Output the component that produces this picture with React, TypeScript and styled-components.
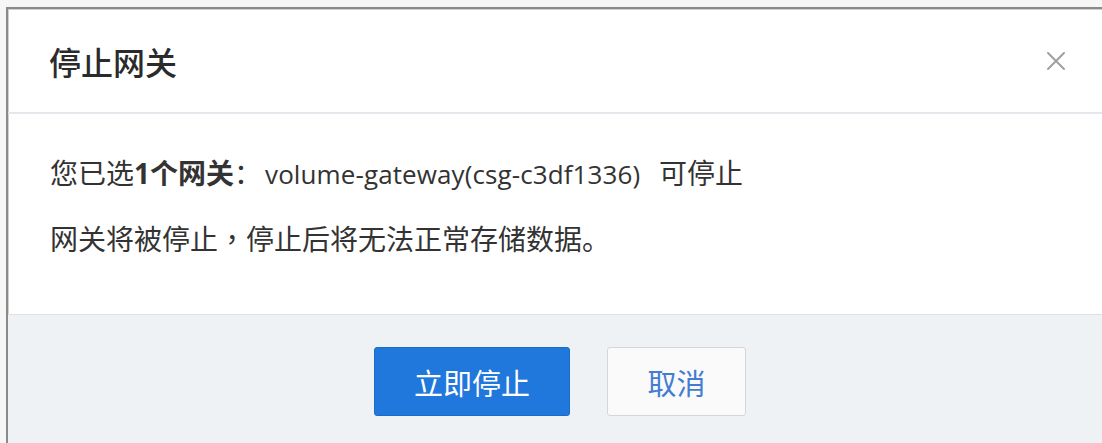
import styled, { createGlobalStyle } from "styled-components";

const GlobalStyle = createGlobalStyle`
  html,
  body {
    margin: 0;
    overflow: hidden;
    background: #f6f6f6;
  }

  body {
    font-family: "Open Sans", "Noto Sans CJK SC", sans-serif;
    color: #333;
  }
`;

const Page = styled.div`
  padding: 7px 0 0 6px;
  height: 443px;
  box-sizing: border-box;
`;

const Dialog = styled.section`
  width: 1104px;
  background: #fff;
  border: 2px solid #8a8a8a;
  box-shadow: inset 1px 1px 0 #cfcfcf;
`;

const Header = styled.header`
  display: flex;
  align-items: center;
  justify-content: space-between;

  height: 103px;
  padding: 0 45px 0 41px;

  border-bottom: 2px solid #e4e7eb;
`;

const Title = styled.h2`
  margin: 0;

  font-family: "Noto Sans CJK SC", sans-serif;
  font-size: 32px;
  font-weight: 500;
  color: #2b2b2b;
`;

const CloseButton = styled.button`
  display: flex;
  padding: 0;

  border: none;
  background: none;
  color: #a0a0a0;

  cursor: pointer;
`;

const Body = styled.div`
  display: flex;
  flex-direction: column;
  gap: 36px;

  height: 200px;
  padding: 45px 42px 0;
  box-sizing: border-box;
`;

const Line = styled.p`
  margin: 0;

  font-size: 28px;
  line-height: 28px;
`;

const Latin = styled.span`
  margin-left: 3px;

  font-size: 26px;
  letter-spacing: 0.1px;
  word-spacing: 12px;
`;

/* full-width comma sits centred in its cell */
const Punct = styled.span`
  font-family: "Noto Sans CJK TC", sans-serif;
`;

const Strong = styled.b`
  font-weight: 700;
`;

const Footer = styled.footer`
  display: flex;
  justify-content: center;
  gap: 37px;

  padding: 32px 0 40px;

  background: #eff2f5;
  border-top: 1px solid #dde1e5;
`;

const Button = styled.button<{ $primary?: boolean }>`
  height: 69px;
  padding: 0;

  font-family: "Noto Sans CJK SC", sans-serif;
  font-size: 29px;

  border-radius: 3px;
  border: 1px solid ${(p) => (p.$primary ? "#1a6cc9" : "#d6d6d6")};
  background: ${(p) => (p.$primary ? "#2077dc" : "#fafafa")};
  color: ${(p) => (p.$primary ? "#fff" : "#437cd2")};

  width: ${(p) => (p.$primary ? "196px" : "139px")};

  cursor: pointer;
`;

const CloseIcon = () => (
  <svg width="22" height="22" viewBox="0 0 22 22" fill="none">
    <path
      d="M3 3 L19 19 M19 3 L3 19"
      stroke="currentColor"
      strokeWidth="2"
      strokeLinecap="round"
    />
  </svg>
);

export default function App() {
  return (
    <>
      <GlobalStyle />
      <Page>
        <Dialog>
          <Header>
            <Title>停止网关</Title>
            <CloseButton aria-label="关闭">
              <CloseIcon />
            </CloseButton>
          </Header>
          <Body>
            <Line>
              您已选<Strong>1个网关</Strong>：
              <Latin>volume-gateway(csg-c3df1336) </Latin>可停止
            </Line>
            <Line>
              网关将被停止<Punct>，</Punct>停止后将无法正常存储数据。
            </Line>
          </Body>
          <Footer>
            <Button $primary>立即停止</Button>
            <Button>取消</Button>
          </Footer>
        </Dialog>
      </Page>
    </>
  );
}
